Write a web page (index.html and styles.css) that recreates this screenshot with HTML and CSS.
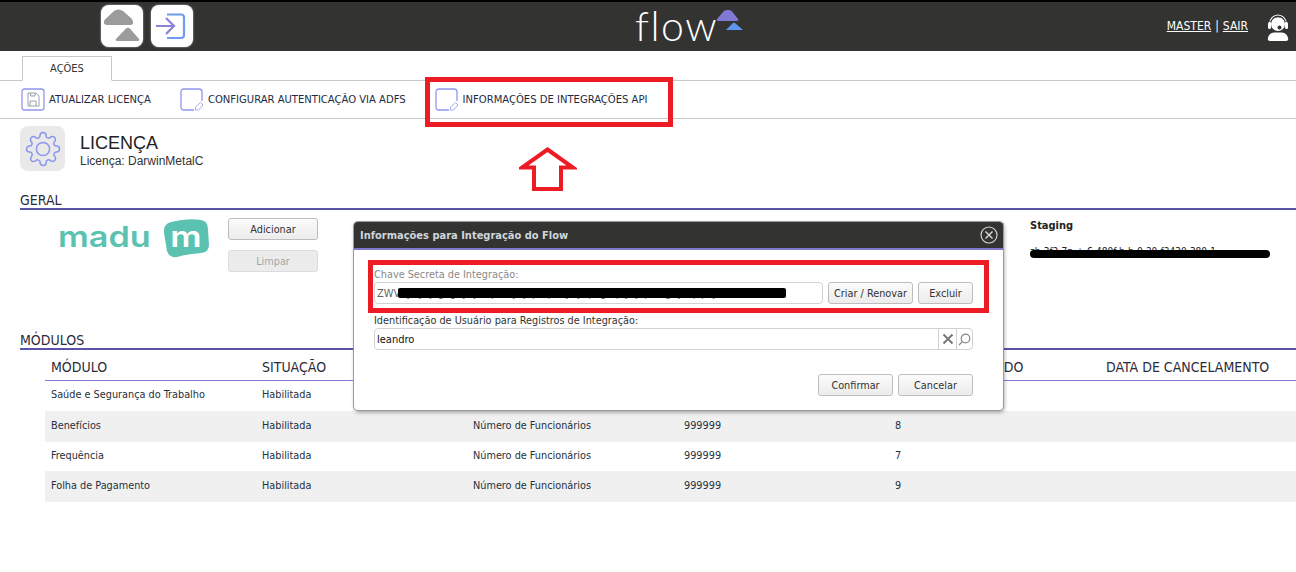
FILE: index.html
```html
<!DOCTYPE html>
<html lang="pt-BR">
<head>
<meta charset="utf-8">
<title>Licença</title>
<link rel="stylesheet" href="styles.css">
</head>
<body>
<header class="topbar">
  <div class="top-left">
    <a class="app-btn"><svg width="42" height="42" viewBox="0 0 42 42"><path d="M3.500 15 L13 6 Q17 3 22 6 L31 14 Q34 20 29 20 L7 20 Q1 20 3.500 15Z" fill="#9b9b9b"/><path d="M15 34 L25 23.500 Q27 22 29 23.500 L38 34 Q39 36 36 36 L17 36 Q14 36 15 34Z" fill="#9b9b9b"/></svg></a>
    <a class="app-btn"><svg width="42" height="42" viewBox="0 0 42 42" fill="none"><path d="M16 9.500 H30 Q33 9.500 33 12.500 V30 Q33 33 30 33 H16" stroke="#6f9cf2" stroke-width="2.200"/><path d="M5 21 H23 M15 13 L23 21 L15 29" stroke="#8a83d8" stroke-width="2.200"/></svg></a>
  </div>
  <div class="brand">
    <span class="brand-word">flow</span>
    <svg class="brand-mark" width="28" height="22" viewBox="0 0 28 22"><path d="M1 9 L7 2 Q8.500 0 11 0 L13 0 Q15 0 16.500 2 L22 9 Q23 11 20 11 L3 11 Q0 11 1 9Z" fill="#8079d3"/><path d="M10 20 L17 13 Q18 12.500 19 13 L27 20 Z" fill="#5e95f0"/></svg>
  </div>
  <div class="top-right">
    <a class="user-link">MASTER</a><span class="pipe">|</span><a class="user-link">SAIR</a>
    <svg class="headset" width="22" height="28" viewBox="0 0 22 28"><circle cx="11" cy="10" r="7" fill="#fff"/><path d="M3 11 V9 A8 8 0 0 1 19 9 V11" fill="none" stroke="#fff" stroke-width="1.200"/><path d="M3.500 8 A8 8 0 0 1 18.500 8" fill="none" stroke="#333" stroke-width="1"/><rect x="1" y="8" width="3" height="7" rx="1.500" fill="#fff"/><rect x="18" y="8" width="3" height="7" rx="1.500" fill="#fff"/><path d="M19 15 Q18 18 13 18" fill="none" stroke="#333" stroke-width="1.200"/><circle cx="12.500" cy="13.500" r="2" fill="#333"/><path d="M3 27 Q0 27 1 24 Q2 19 7 18.500 L15 18.500 Q20 19 21 24 Q22 27 19 27Z" fill="#fff"/></svg>
  </div>
</header>

<nav class="tabs"><div class="tab">AÇÕES</div></nav>

<div class="toolbar">
  <a class="tool tool-save">
    <svg width="24" height="23" viewBox="0 0 24 23" fill="none" stroke="#8f96f0"><rect x="1" y="1" width="22" height="21" rx="2.500" stroke-width="1.300"/><path d="M7 5 H15 L18 8 V18 H7Z" stroke="#9aa0a8"/><path d="M9 18 V13 H15 V18 M9.500 5 V8 H14 V5" stroke="#9aa0a8"/></svg>
    <span>ATUALIZAR LICENÇA</span>
  </a>
  <a class="tool tool-adfs">
    <svg width="24" height="23" viewBox="0 0 24 23" fill="none" stroke="#8f96f0"><path d="M14 22 H4 Q1 22 1 19 V4 Q1 1 4 1 H19 Q22 1 22 4 V13" stroke-width="1.300"/><path d="M15.500 22 L15.500 19 L20.500 14.500 L23 17 L18.500 22Z" stroke="#a9a9ef"/></svg>
    <span>CONFIGURAR AUTENTICAÇÃO VIA ADFS</span>
  </a>
  <a class="tool tool-api">
    <svg width="24" height="23" viewBox="0 0 24 23" fill="none" stroke="#8f96f0"><path d="M14 22 H4 Q1 22 1 19 V4 Q1 1 4 1 H19 Q22 1 22 4 V13" stroke-width="1.300"/><path d="M15.500 22 L15.500 19 L20.500 14.500 L23 17 L18.500 22Z" stroke="#a9a9ef"/></svg>
    <span>INFORMAÇÕES DE INTEGRAÇÕES API</span>
  </a>
</div>

<section class="title-block">
  <div class="title-icon"><svg width="36" height="36" viewBox="0 0 24 24" fill="none" stroke="#8a96f0" stroke-width="1"><circle cx="12" cy="12" r="4.400"/><path d="M19.400 15a1.650 1.650 0 0 0 .33 1.820l.06.06a2 2 0 0 1 0 2.830 2 2 0 0 1-2.830 0l-.06-.06a1.650 1.650 0 0 0-1.820-.33 1.650 1.650 0 0 0-1 1.510V21a2 2 0 0 1-2 2 2 2 0 0 1-2-2v-.09A1.650 1.650 0 0 0 9 19.400a1.650 1.650 0 0 0-1.820.33l-.06.06a2 2 0 0 1-2.830 0 2 2 0 0 1 0-2.830l.06-.06a1.650 1.650 0 0 0 .33-1.820 1.650 1.650 0 0 0-1.510-1H3a2 2 0 0 1-2-2 2 2 0 0 1 2-2h.09A1.650 1.650 0 0 0 4.600 9a1.650 1.650 0 0 0-.33-1.820l-.06-.06a2 2 0 0 1 0-2.830 2 2 0 0 1 2.830 0l.06.06a1.650 1.650 0 0 0 1.820.33H9a1.650 1.650 0 0 0 1-1.510V3a2 2 0 0 1 2-2 2 2 0 0 1 2 2v.09a1.650 1.650 0 0 0 1 1.510 1.650 1.650 0 0 0 1.820-.33l.06-.06a2 2 0 0 1 2.830 0 2 2 0 0 1 0 2.830l-.06.06a1.650 1.650 0 0 0-.33 1.820V9a1.650 1.650 0 0 0 1.510 1H21a2 2 0 0 1 2 2 2 2 0 0 1-2 2h-.09a1.650 1.650 0 0 0-1.510 1z"/></svg></div>
  <div class="title-text">
    <h1>LICENÇA</h1>
    <p>Licença: DarwinMetalC</p>
  </div>
</section>

<h2 class="section-head head-geral">GERAL</h2>
<section class="geral">
  <div class="madu">
    <span class="madu-word">madu</span>
    <div class="madu-tile">
      <svg width="46" height="39" viewBox="0 0 46 39"><path d="M8 3 Q24 -1 38 1 Q45 2 45 10 L46 26 Q46 33 38 34 Q24 35 14 38 Q6 39 4 32 L1 14 Q0 5 8 3Z" fill="#5bc2b2"/></svg>
      <span class="madu-m">m</span>
    </div>
  </div>
  <div class="geral-btns">
    <button class="btn btn-geral">Adicionar</button>
    <button class="btn btn-geral btn-off">Limpar</button>
  </div>
  <div class="env env-a"><strong>Produção</strong></div>
  <div class="env env-b"><strong>Licenças</strong></div>
  <div class="env env-c"><strong>Homologação:</strong></div>
  <div class="env env-d">
    <strong>Staging</strong>
    <div class="scribble"><span class="scribble-text">zb-3f2-7p-+-6-480f-b-b-0-20-f2430-380-1</span><i class="scribble-ink"></i></div>
  </div>
</section>

<h2 class="section-head head-mod">MÓDULOS</h2>
<table class="mods">
  <thead>
    <tr><th>MÓDULO</th><th>SITUAÇÃO</th><th>LICENCIAMENTO</th><th>QUANTIDADE</th><th>NÚMERO UTILIZADO</th><th>DATA DE CANCELAMENTO</th></tr>
  </thead>
  <tbody>
    <tr><td>Saúde e Segurança do Trabalho</td><td>Habilitada</td><td>Número de Funcionários</td><td>999999</td><td>8</td><td></td></tr>
    <tr><td>Benefícios</td><td>Habilitada</td><td>Número de Funcionários</td><td>999999</td><td>8</td><td></td></tr>
    <tr><td>Frequência</td><td>Habilitada</td><td>Número de Funcionários</td><td>999999</td><td>7</td><td></td></tr>
    <tr><td>Folha de Pagamento</td><td>Habilitada</td><td>Número de Funcionários</td><td>999999</td><td>9</td><td></td></tr>
  </tbody>
</table>

<div class="modal">
  <div class="modal-head">
    <span>Informações para Integração do Flow</span>
    <svg width="18" height="18" viewBox="0 0 18 18" fill="none" stroke="#ddd"><circle cx="9" cy="9" r="8" stroke-width="1.100"/><path d="M5.500 5.500 L12.500 12.500 M12.500 5.500 L5.500 12.500" stroke-width="1.400"/></svg>
  </div>
  <div class="modal-body">
    <label class="lbl lbl-muted">Chave Secreta de Integração:</label>
    <div class="key-row">
      <div class="field key-field"><span>ZWV</span><span class="key-text">y y j g g y j   p   y j p q   y y p g q y j p   g y q p j</span><i class="key-ink"></i></div>
      <button class="btn btn-renew">Criar / Renovar</button>
      <button class="btn btn-del">Excluir</button>
    </div>
    <label class="lbl lbl-user">Identificação de Usuário para Registros de Integração:</label>
    <div class="field user-field">
      <span class="user-val">leandro</span>
      <span class="field-act"><svg width="12" height="12" viewBox="0 0 12 12" fill="none" stroke="#777" stroke-width="2"><path d="M1.500 1.500 L10.500 10.500 M10.500 1.500 L1.500 10.500"/></svg></span>
      <span class="field-act act-search"><svg width="13" height="13" viewBox="0 0 13 13" fill="none" stroke="#888" stroke-width="1.200"><circle cx="7.500" cy="5.500" r="4.300"/><path d="M4.500 8.500 L1 12"/></svg></span>
    </div>
    <div class="modal-foot">
      <button class="btn btn-foot">Confirmar</button>
      <button class="btn btn-foot">Cancelar</button>
    </div>
  </div>
  <div class="mark mark-key"></div>
</div>

<div class="mark mark-api"></div>
<svg class="mark-arrow" width="58" height="46" viewBox="0 0 58 46" fill="#fff" stroke="#ed1c24" stroke-width="4"><path d="M28.500 2.500 L54 20.500 L42 20.500 L42 42 L15 42 L15 20.500 L3 20.500Z"/></svg>
</body>
</html>
```

FILE: styles.css
```css
* { box-sizing: border-box; }
html, body { margin: 0; padding: 0; }
body {
  position: relative;
  height: 572px;
  overflow: hidden;
  background: #fff;
  color: #222;
  font: 10.800px "DejaVu Sans Condensed", "DejaVu Sans", sans-serif;
}

/* top bar */
.topbar {
  display: grid;
  grid-template-columns: 635px 110px 1fr;
  height: 51px;
  background: #333331;
  border-top: 2px solid #000;
}
.top-left { display: flex; gap: 8px; padding: 3px 0 0 101px; }
.app-btn {
  width: 42px;
  height: 42px;
  background: #fff;
  border-radius: 8px;
  box-shadow: 0 0 2px #ccc;
  display: block;
}
.app-btn svg { display: block; }
.brand { display: flex; align-items: flex-start; }
.brand-word {
  font: 300 41px/38px Lato, sans-serif;
  letter-spacing: 1.500px;
  color: #fff;
  margin-top: 5px;
  width: 81px;
}
.brand-mark { margin-top: 8px; }
.top-right {
  display: flex;
  justify-content: flex-end;
  align-items: center;
  padding: 0 7px 1px 0;
  color: #fff;
  font-size: 12px;
}
.user-link { color: #fff; text-decoration: underline; }
.pipe { margin: 0 4px; }
.headset { margin-left: 19px; margin-top: 3px; }

/* tabs and toolbar */
.tabs { height: 30px; padding: 5px 0 0 22px; border-bottom: 1px solid #c8c8c8; }
.tab {
  width: 90px;
  height: 25px;
  border: 1px solid #c8c8c8;
  border-bottom: 1px solid #fff;
  background: #fff;
  text-align: center;
  line-height: 24px;
  font-size: 11px;
  color: #333;
}
.toolbar {
  display: flex;
  align-items: center;
  height: 38px;
  padding-bottom: 1px;
  border-bottom: 1px solid #c8c8c8;
  color: #1d2a44;
  font-size: 11.150px;
  white-space: nowrap;
}
.tool { display: flex; align-items: center; gap: 4px; }
.tool svg { flex: none; }
.tool-save { margin-left: 21px; }
.tool-adfs { margin-left: 29px; }
.tool-api { margin-left: 29px; }

/* title */
.title-block { display: flex; gap: 15px; padding: 7px 0 0 20px; height: 71px; }
.title-icon {
  width: 45px;
  height: 45px;
  border-radius: 8px;
  background: #e9e9e9;
  display: flex;
  align-items: center;
  justify-content: center;
}
.title-text { padding-top: 7px; font-family: "Liberation Sans", Arial, sans-serif; }
.title-text h1 { margin: 0; font-size: 18px; font-weight: 400; line-height: 20px; color: #222; }
.title-text p { margin: 1px 0 0; font-size: 12px; line-height: 14px; color: #333; }

/* sections */
.section-head {
  margin: 0 0 0 20px;
  height: 20px;
  font-size: 14px;
  font-weight: 400;
  line-height: 20px;
  color: #2c2c3a;
  border-bottom: 2px solid #5a54a8;
}
.geral { position: relative; display: flex; height: 120px; padding: 8px 0 0 58px; }
.madu { display: flex; align-items: flex-start; width: 170px; }
.madu-word {
  width: 105px;
  color: #5bc2b2;
  font: 600 29px/30px Inter, sans-serif;
  transform: scaleX(1.180);
  transform-origin: left center;
  margin-top: 4px;
}
.madu-tile { position: relative; width: 46px; height: 39px; margin-top: 1px; }
.madu-tile svg { display: block; }
.madu-m {
  position: absolute;
  left: 8px;
  top: 3px;
  width: 30px;
  text-align: center;
  font: 600 29px/30px Inter, sans-serif;
  transform: scaleX(1.200);
  color: #fff;
}
.geral-btns { display: flex; flex-direction: column; gap: 10px; }
.btn {
  font: inherit;
  color: #333;
  height: 22px;
  padding: 0;
  border: 1px solid #bdbdbd;
  border-radius: 3px;
  background: linear-gradient(#fbfbfb, #ececec);
}
.btn-geral { width: 90px; }
.btn-off { background: #ececec; border-color: #dcdcdc; color: #a5a5a5; }
.env { position: absolute; top: 9px; font-size: 11px; color: #222; }
.env-a { left: 505px; }
.env-b { left: 663px; }
.env-c { left: 925px; }
.env-d { left: 1030px; width: 240px; }
.scribble { position: relative; margin-top: 13px; height: 12px; overflow: visible; white-space: nowrap; }
.scribble-text { font-size: 10px; }
.scribble-ink {
  position: absolute;
  left: 0;
  top: 5px;
  width: 240px;
  height: 8px;
  border-radius: 4px;
  background: #000;
}

/* table */
.mods {
  width: 1266px;
  margin-left: 45px;
  border-collapse: collapse;
  table-layout: fixed;
}
.mods th {
  height: 30px;
  padding: 4px 0 0 6px;
  text-align: left;
  font-size: 14px;
  font-weight: 400;
  color: #2c2c3a;
  border-bottom: 1px solid #8078d0;
}
.mods td { height: 30px; padding: 0 0 2px 6px; color: #26303c; border-bottom: 1px solid #f2f2f2; }
.mods tbody tr:first-child td { height: 31px; }
.mods tbody tr:nth-child(even) td { background: #f0f0f0; }

/* modal */
.modal {
  position: absolute;
  left: 354px;
  top: 222px;
  width: 649px;
  height: 188px;
  background: #fff;
  border-radius: 4px;
  box-shadow: 0 0 0 1px #9a9a9a, 1px 2px 4px rgba(0,0,0,.4);
}
.modal-head {
  display: flex;
  justify-content: space-between;
  align-items: center;
  height: 28px;
  padding: 0 5px 0 6px;
  background: #333331;
  border-bottom: 2px solid #8078d0;
  border-radius: 4px 4px 0 0;
  color: #cfd6dc;
  font-weight: 700;
  font-size: 11px;
}
.modal-body { padding: 18px 30px 0 20px; }
.lbl { display: block; line-height: 14px; }
.lbl-muted { color: #8a8a8a; }
.lbl-user { margin-top: 10px; color: #333; }
.key-row { display: flex; gap: 5px; }
.field {
  position: relative;
  height: 22px;
  border: 1px solid #d2d2d2;
  border-radius: 4px;
  background: #fff;
  display: flex;
  align-items: center;
  font-size: 11px;
}
.key-field { width: 449px; padding-left: 2px; color: #666; overflow: hidden; white-space: pre; }
.key-text { margin-left: 6px; letter-spacing: 1.300px; }
.key-ink {
  position: absolute;
  left: 23px;
  top: 5px;
  width: 388px;
  height: 10px;
  border-radius: 2px;
  background: #000;
}
.btn-renew { width: 85px; }
.btn-del { width: 55px; }
.user-field { width: 599px; color: #111; }
.user-val { flex: 1; padding-left: 2px; }
.field-act {
  width: 18px;
  height: 100%;
  border-left: 1px solid #d2d2d2;
  display: flex;
  align-items: center;
  justify-content: center;
}
.act-search { width: 16px; }
.modal-foot { display: flex; justify-content: flex-end; gap: 5px; margin-top: 24px; }
.btn-foot { width: 75px; }

/* annotations */
.mark { position: absolute; border: 5px solid #ed1c24; }
.mark-api { left: 425px; top: 77px; width: 248px; height: 50px; }
.mark-key { left: 14px; top: 38px; width: 621px; height: 53px; }
.mark-arrow { position: absolute; left: 519px; top: 147px; }
```
